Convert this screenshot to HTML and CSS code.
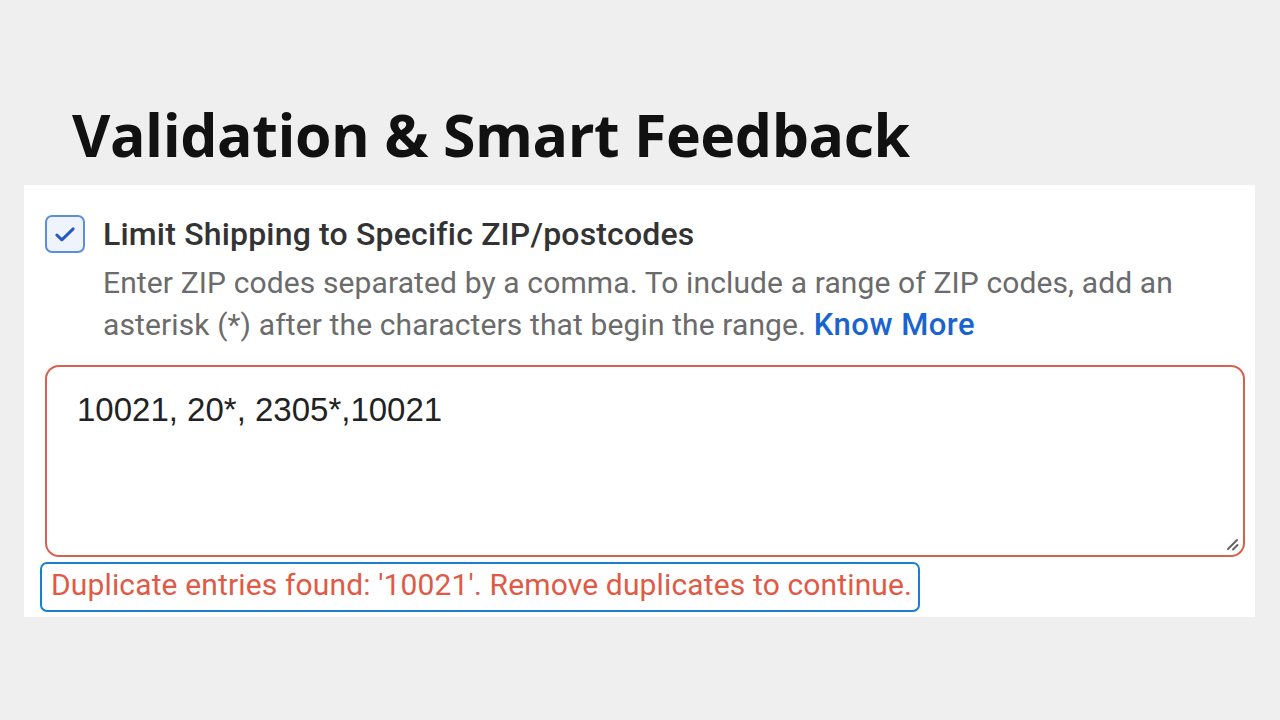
FILE: index.html
```html
<!DOCTYPE html>
<html>
<head>
<meta charset="utf-8">
<link rel="stylesheet" href="styles.css">
</head>
<body>
<div class="page">
  <h1 class="title">Validation &amp; Smart Feedback</h1>
  <div class="panel">
    <div class="option">
      <span class="checkbox">
        <svg viewBox="0 0 24 24" width="28" height="28"><path d="M5 12.8l4.3 4.2L19 7.6" fill="none" stroke="#2458c4" stroke-width="2.5" stroke-linecap="round" stroke-linejoin="round"/></svg>
      </span>
      <div class="option-text">
        <div class="label">Limit Shipping to Specific ZIP/postcodes</div>
        <div class="desc">Enter ZIP codes separated by a comma. To include a range of ZIP codes, add an<br>asterisk (*) after the characters that begin the range. <a class="link">Know More</a></div>
      </div>
    </div>
    <div class="field">
      <div class="field-value">10021, 20*, 2305*,10021</div>
      <svg class="grip" viewBox="0 0 14 14" width="14" height="14"><path d="M3 12L12 3M8 12.5L12.5 8" stroke="#666" stroke-width="2" stroke-linecap="round"/></svg>
    </div>
    <div class="error">Duplicate entries found: '10021'. Remove duplicates to continue.</div>
  </div>
</div>
</body>
</html>
```
FILE: styles.css
```css
html, body {
  margin: 0;
  padding: 0;
  background: #efefef;
}
.page {
  width: 1280px;
  height: 720px;
  padding-top: 92px;
  box-sizing: border-box;
}
.title {
  margin: 0 0 8px 72px;
  font-family: "Open Sans", sans-serif;
  font-weight: 700;
  font-size: 59px;
  line-height: 85px;
  color: #111;
  letter-spacing: -0.45px;
  white-space: nowrap;
}
.panel {
  margin-left: 24px;
  width: 1231px;
  height: 432px;
  background: #fff;
  box-sizing: border-box;
  padding: 30px 10px 0 16px;
  font-family: Roboto, "Liberation Sans", sans-serif;
}
.option {
  display: flex;
  align-items: flex-start;
  padding-left: 5px;
}
.checkbox {
  flex: none;
  width: 36px;
  height: 34px;
  border: 2px solid #5b8ee0;
  border-radius: 7px;
  background: #eef3fc;
  display: flex;
  align-items: center;
  justify-content: center;
}
.option-text {
  margin-left: 18px;
  padding-top: 1px;
}
.label {
  font-size: 32px;
  font-weight: 500;
  color: #333;
  line-height: 36px;
  letter-spacing: 0.18px;
  white-space: nowrap;
}
.desc {
  margin-top: 10px;
  font-size: 30px;
  color: #6b6b6b;
  line-height: 42px;
  letter-spacing: 0.12px;
  white-space: nowrap;
}
.link {
  color: #1a64d0;
  font-weight: 500;
  font-size: 31px;
  letter-spacing: 0.5px;
}
.field {
  position: relative;
  margin-top: 19px;
  margin-left: 5px;
  width: 1200px;
  height: 192px;
  box-sizing: border-box;
  border: 2px solid #d9604c;
  border-radius: 14px;
  padding: 24px 30px;
}
.field-value {
  font-family: "Liberation Sans", Arial, sans-serif;
  font-size: 33px;
  color: #222;
  line-height: 38px;
}
.grip {
  position: absolute;
  right: 4px;
  bottom: 4px;
}
.error {
  display: inline-block;
  margin-top: 5px;
  border: 2px solid #1a7fd0;
  border-radius: 7px;
  padding: 1px 6px 5px 9px;
  font-size: 30px;
  line-height: 40px;
  letter-spacing: 0.14px;
  color: #e05a45;
  white-space: nowrap;
}
```
